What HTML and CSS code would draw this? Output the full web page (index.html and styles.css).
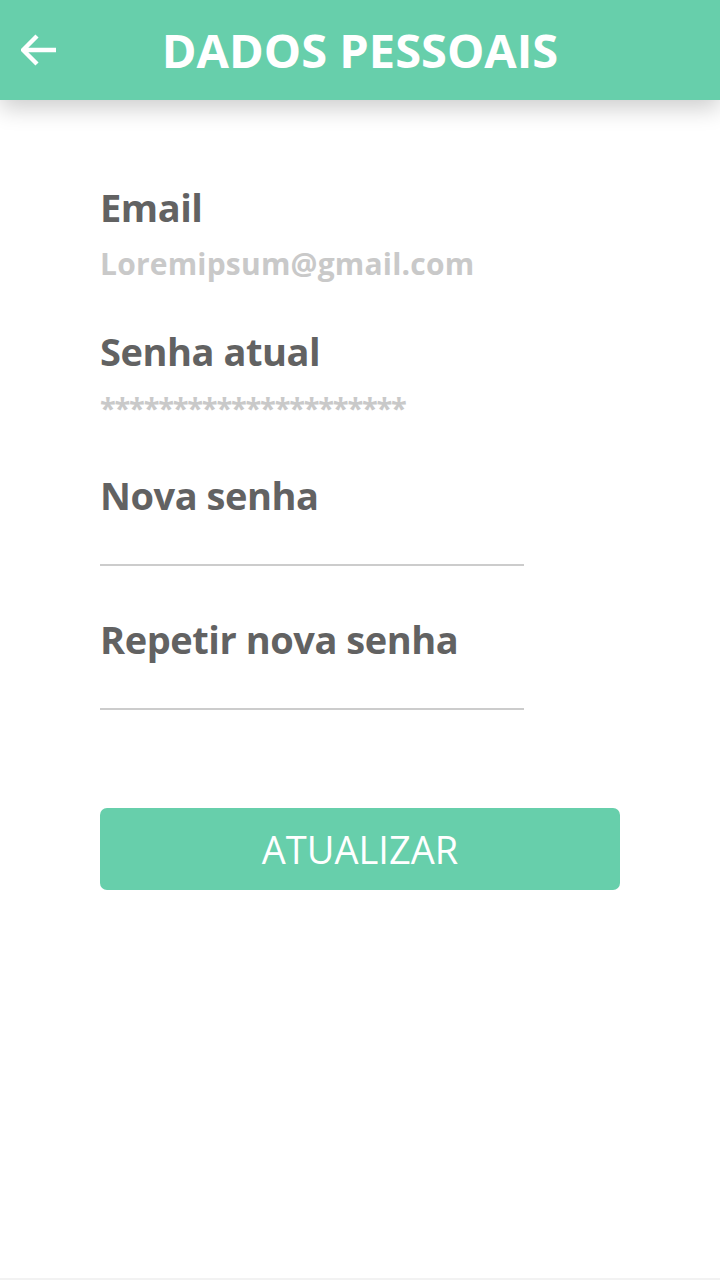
FILE: index.html
```html
<!DOCTYPE html>
<html lang="pt">
<head>
<meta charset="utf-8">
<title>Dados pessoais</title>
<link rel="stylesheet" href="styles.css">
</head>
<body>
<div class="app">
  <header class="topbar">
    <a class="back" href="#" aria-label="Voltar">
      <svg width="36" height="32" viewBox="0 0 36 32">
        <path d="M16 2 L2 16 L16 30 M2 16 L35 16" fill="none" stroke="#fff" stroke-width="4.4" stroke-linecap="butt" stroke-linejoin="miter"/>
      </svg>
    </a>
    <h1 class="title">DADOS PESSOAIS</h1>
    <span></span>
  </header>
  <main class="form">
    <section class="field">
      <div class="label">Email</div>
      <div class="value">Loremipsum@gmail.com</div>
    </section>
    <section class="field">
      <div class="label">Senha atual</div>
      <div class="value stars">*********************</div>
    </section>
    <section class="field">
      <div class="label">Nova senha</div>
      <div class="input"></div>
    </section>
    <section class="field">
      <div class="label">Repetir nova senha</div>
      <div class="input"></div>
    </section>
    <button class="btn">ATUALIZAR</button>
  </main>
</div>
</body>
</html>
```
FILE: styles.css
```css
* { box-sizing: border-box; }
html, body { margin: 0; padding: 0; background: #fff; }
body { font-family: "Open Sans", "Noto Sans", sans-serif; }
.app {
  min-height: 1280px;
  border-bottom: 2px solid #f2f2f2;
}
.topbar {
  height: 100px;
  background: #67cfab;
  display: grid;
  grid-template-columns: 1fr auto 1fr;
  align-items: center;
  box-shadow: 0 8px 22px rgba(0, 0, 0, 0.2);
  position: relative;
}
.back {
  display: flex;
  align-items: center;
  padding-left: 21px;
  height: 100px;
}
.back svg { display: block; }
.title {
  margin: 0;
  color: #fff;
  font-weight: 700;
  font-size: 47px;
  line-height: 98px;
}
.form {
  padding: 83px 0 0 100px;
  display: flex;
  flex-direction: column;
}
.field {
  height: 144px;
}
.label {
  color: #626262;
  font-weight: 700;
  font-size: 38px;
  line-height: 48px;
  letter-spacing: -0.45px;
}
.value {
  margin-top: 13px;
  color: #c9c9c9;
  font-weight: 700;
  font-size: 30px;
  line-height: 40px;
  letter-spacing: 0.2px;
}
.stars { font-size: 29px; letter-spacing: -1.25px; }
.input {
  width: 424px;
  height: 47px;
  border-bottom: 2px solid #cccccc;
}
.btn {
  margin-top: 49px;
  width: 520px;
  height: 82px;
  border: none;
  border-radius: 7px;
  background: #67cfab;
  color: #fff;
  font-family: "Open Sans", "Noto Sans", sans-serif;
  font-weight: 400;
  font-size: 38px;
  padding: 0;
  cursor: pointer;
}
```
